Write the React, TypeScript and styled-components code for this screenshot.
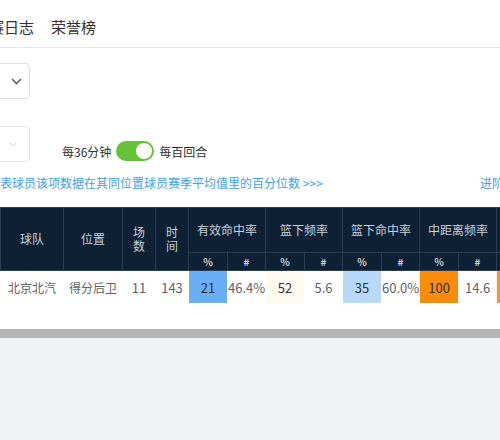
import styled, { createGlobalStyle } from 'styled-components'

const GlobalStyle = createGlobalStyle`
  html, body {
    margin: 0;
    padding: 0;
    background: #f0f1f5;
  }
  body {
    font-family: "Noto Sans CJK SC", "Noto Sans", sans-serif;
    overflow: hidden;
  }
`

type Group = { name: string; pct: number; val: string; bg: string }

const groups: Group[] = [
  { name: '有效命中率', pct: 21, val: '46.4%', bg: '#6aaef6' },
  { name: '篮下频率', pct: 52, val: '5.6', bg: '#fffaf2' },
  { name: '篮下命中率', pct: 35, val: '60.0%', bg: '#b9d9fb' },
  { name: '中距离频率', pct: 100, val: '14.6', bg: '#fb8c0b' },
  { name: '中距离命中率', pct: 94, val: '47.5%', bg: '#fb9626' },
  { name: '三分频率', pct: 12, val: '0.4', bg: '#8cc0f8' }
]

const Chevron = ({ $disabled }: { $disabled?: boolean }) => (
  <svg
    width={$disabled ? 8 : 11}
    height={$disabled ? 5 : 7}
    viewBox="0 0 11 7"
    fill="none"
    stroke={$disabled ? '#c0c4cc' : '#606266'}
    strokeWidth={$disabled ? 1.2 : 1.6}
  >
    <path d="M1 1 L5.5 5.5 L10 1" />
  </svg>
)

const App = () => {
  return (
    <>
      <GlobalStyle />
      <Viewport>
        <Nav>
          <NavItem>比赛日志</NavItem>
          <NavItem>荣誉榜</NavItem>
        </Nav>

        <Filters>
          <SelectRow>
            <Select $pad={7}>
              <Chevron />
            </Select>
          </SelectRow>
          <SelectRow $top={27}>
            <Select $pad={12} $disabled>
              <Chevron $disabled />
            </Select>
            <ToggleGroup>
              <span>每36分钟</span>
              <Switch>
                <Knob />
              </Switch>
              <span>每百回合</span>
            </ToggleGroup>
          </SelectRow>
        </Filters>

        <LinkRow>
          <LinkText>代表球员该项数据在其同位置球员赛季平均值里的百分位数 &gt;&gt;&gt;</LinkText>
          <LinkText $right>进阶数据</LinkText>
        </LinkRow>

        <TableWrap>
          <Table>
            <colgroup>
              <col style={{ width: 63 }} />
              <col style={{ width: 59 }} />
              <col style={{ width: 33 }} />
              <col style={{ width: 33 }} />
              {groups.map((g) => [
                <col key={g.name + 'p'} style={{ width: 39 }} />,
                <col key={g.name + 'v'} style={{ width: 38 }} />
              ])}
            </colgroup>
            <thead>
              <tr>
                <Th rowSpan={2}>球队</Th>
                <Th rowSpan={2}>位置</Th>
                <Th rowSpan={2}>场数</Th>
                <Th rowSpan={2}>时间</Th>
                {groups.map((g) => (
                  <Th key={g.name} colSpan={2}>
                    {g.name}
                  </Th>
                ))}
              </tr>
              <tr>
                {groups.map((g) => [
                  <SubTh key={g.name + 'p'}>%</SubTh>,
                  <SubTh key={g.name + 'v'}>#</SubTh>
                ])}
              </tr>
            </thead>
            <tbody>
              <tr>
                <Td $text>北京北汽</Td>
                <Td $text>得分后卫</Td>
                <Td>11</Td>
                <Td>143</Td>
                {groups.map((g) => [
                  <Td key={g.name + 'p'} $bg={g.bg}>
                    {g.pct}
                  </Td>,
                  <Td key={g.name + 'v'}>{g.val}</Td>
                ])}
              </tr>
            </tbody>
          </Table>
          <ScrollBar />
        </TableWrap>
      </Viewport>
    </>
  )
}

const Viewport = styled.div`
  width: 500px;
  overflow: hidden;
  background: #ffffff;
`

const Nav = styled.nav`
  display: flex;
  align-items: center;
  gap: 17px;
  height: 47px;
  margin-left: -26px;
  border-bottom: 1px solid #e4e7ed;
`

const NavItem = styled.span`
  font-size: 15px;
  color: #303133;
  white-space: nowrap;
  padding-top: 6px;
`

const Filters = styled.div`
  padding-top: 15px;
`

const SelectRow = styled.div<{ $top?: number }>`
  display: flex;
  align-items: flex-end;
  gap: 32px;
  margin-top: ${({ $top }) => $top ?? 0}px;
`

const Select = styled.div<{ $pad: number; $disabled?: boolean }>`
  width: 140px;
  height: 36px;
  margin-left: -110px;
  box-sizing: border-box;
  border: 1px solid ${({ $disabled }) => ($disabled ? '#e4e7ed' : '#dcdfe6')};
  border-radius: 4px;
  background: #ffffff;
  display: flex;
  align-items: center;
  justify-content: flex-end;
  padding-right: ${({ $pad }) => $pad}px;
`

const ToggleGroup = styled.div`
  display: flex;
  align-items: center;
  gap: 5px;
  height: 20px;
  margin-bottom: 1px;
  font-size: 12px;
  color: #303133;
  white-space: nowrap;
`

const Switch = styled.div`
  width: 38px;
  height: 20px;
  border-radius: 10px;
  background: #67c23a;
  display: flex;
  align-items: center;
  justify-content: flex-end;
  padding-right: 2px;
  box-sizing: border-box;
`

const Knob = styled.div`
  width: 16px;
  height: 16px;
  border-radius: 50%;
  background: #ffffff;
`

const LinkRow = styled.div`
  display: flex;
  margin: 11px -28px 0 -12px;
  font-size: 12px;
  line-height: 20px;
  color: #409eff;
  white-space: nowrap;
`

const LinkText = styled.span<{ $right?: boolean }>`
  margin-left: ${({ $right }) => ($right ? 'auto' : '0')};
  cursor: pointer;
`

const TableWrap = styled.div`
  margin-top: 14px;
  padding-bottom: 25px;
  display: flex;
  flex-direction: column;
  gap: 25px;
`

const Table = styled.table`
  border-collapse: collapse;
  table-layout: fixed;
  width: ${63 + 59 + 33 + 33 + groups.length * 77}px;
  font-family: "Noto Sans CJK SC", "Noto Sans", sans-serif;
`

const Th = styled.th`
  height: 44px;
  padding: 0 6px;
  background: #0e2033;
  color: #c9d1da;
  font-size: 12px;
  font-weight: normal;
  line-height: 14px;
  text-align: center;
  border: 1px solid #2c3e51;
  white-space: normal;
`

const SubTh = styled.th`
  height: 17px;
  padding: 0;
  background: #0e2033;
  color: #c9d1da;
  font-size: 10px;
  font-weight: bold;
  line-height: 12px;
  text-align: center;
  border: 1px solid #2c3e51;
`

const Td = styled.td<{ $bg?: string; $text?: boolean }>`
  height: 32px;
  padding: 0;
  font-size: ${({ $text }) => ($text ? 12 : 13)}px;
  color: ${({ $bg }) => ($bg ? '#303133' : '#606266')};
  background: ${({ $bg }) => $bg ?? '#ffffff'};
  text-align: center;
  border: 1px solid #ffffff;
  white-space: nowrap;
  overflow: hidden;
`

const ScrollBar = styled.div`
  height: 9px;
  margin-bottom: -25px;
  background: #b4b4b6;
`

export default App
